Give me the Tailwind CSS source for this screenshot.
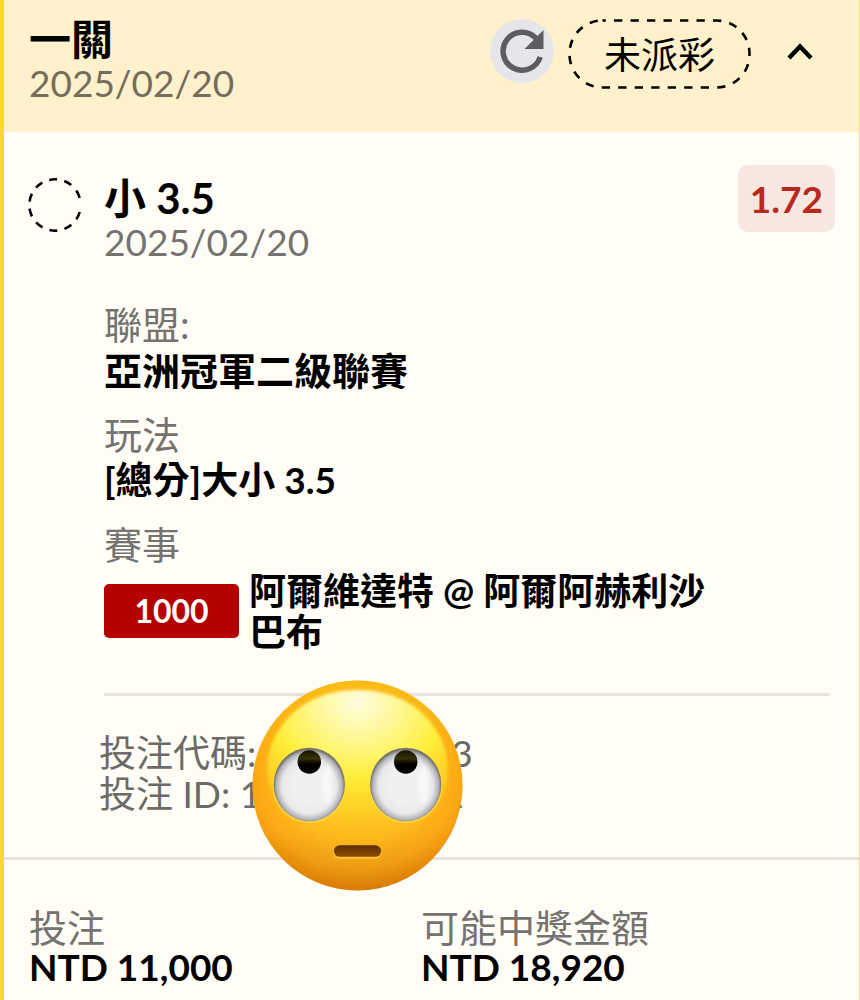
<!DOCTYPE html>
<html lang="zh-Hant">
  <head>
    <meta charset="UTF-8" />
    <meta name="viewport" content="width=device-width, initial-scale=1.0" />
    <title>一關 2025/02/20</title>
    <script src="https://cdn.jsdelivr.net/npm/@tailwindcss/browser@4"></script>
  </head>
  <body class="bg-[#fffdf5]">
    <main
      class="min-h-screen overflow-hidden border-l-4 border-r border-l-[#ffd633] border-r-[#f3e06a] bg-[#fffdf5] font-['Lato','Noto_Sans_CJK_TC',sans-serif] text-[37px] leading-[46px] text-black"
    >
      <header
        class="flex items-start justify-between bg-[#fef1cc] pt-[15px] pr-[25px] pb-[29px] pl-[25px]"
      >
        <div>
          <h1 class="text-[42px] leading-[48px] font-bold">一關</h1>
          <p class="leading-10 text-[#746d5b]">2025/02/20</p>
        </div>
        <div class="flex items-center pt-1">
          <button type="button" aria-label="重新整理" class="mb-[6px] size-16">
            <svg viewBox="0 0 64 64" class="size-16">
              <circle cx="32" cy="32" r="32" fill="#e5e6ea" />
              <path d="M46 19.2A19 19 0 1 0 50.2 38" fill="none" stroke="#5c5d60" stroke-width="5.5" />
              <path d="M53.5 11v19h-19z" fill="#5c5d60" />
            </svg>
          </button>
          <div class="relative ml-[14px] h-[70px] w-[183px] text-center leading-[72px]">
            <svg class="absolute inset-0 size-full">
              <rect
                x="1.5"
                y="1.5"
                width="180"
                height="67"
                rx="33"
                fill="none"
                stroke="#000"
                stroke-width="2.6"
                stroke-dasharray="8.3 8.2"
                stroke-dashoffset="5"
              />
            </svg>
            <span class="relative">未派彩</span>
          </div>
          <button type="button" aria-label="收合" class="mr-[10px] mb-1 ml-[25px] size-12">
            <svg viewBox="0 0 48 48" class="size-12">
              <path d="M13 30 24 18.5 35 30" fill="none" stroke="#000" stroke-width="4.4" />
            </svg>
          </button>
        </div>
      </header>

      <section class="flex pt-[33px] pr-6 pl-6">
        <div class="w-[76px] shrink-0 pt-[13px]">
          <svg viewBox="0 0 54 54" class="size-[54px]">
            <circle
              cx="27"
              cy="27"
              r="25.7"
              pathLength="360"
              fill="none"
              stroke="#000"
              stroke-width="2.6"
              stroke-dasharray="18 16.4"
              stroke-dashoffset="-16"
            />
          </svg>
        </div>
        <div class="grow">
          <div class="flex items-start justify-between">
            <div class="pt-[9px]">
              <h2 class="text-[42px] leading-[48px] font-bold">小 3.5</h2>
              <p class="leading-10 text-[#747370]">2025/02/20</p>
            </div>
            <span
              class="rounded-[10px] bg-[#f7e7e1] px-3 text-center leading-[67px] font-bold text-[#b8281f]"
              >1.72</span
            >
          </div>

          <dl class="mt-[39px] flex flex-col gap-[18px]">
            <div>
              <dt class="text-[38px] text-[#747370]">聯盟:</dt>
              <dd class="text-[38px] font-bold">亞洲冠軍二級聯賽</dd>
            </div>
            <div>
              <dt class="text-[38px] text-[#747370]">玩法</dt>
              <dd class="font-bold">[總分]大小 3.5</dd>
            </div>
            <div>
              <dt class="text-[38px] text-[#747370]">賽事</dt>
              <dd class="mt-[3px] flex items-center gap-[10px] font-bold">
                <span
                  class="w-[135px] shrink-0 rounded-[5px] bg-[#b50000] text-center text-[32px] leading-[54px] text-white"
                  >1000</span
                >
                <span class="max-w-[480px] leading-[41px]">阿爾維達特 @ 阿爾阿赫利沙巴布</span>
              </dd>
            </div>
          </dl>
          <hr class="mt-[41px] mr-[6px] border-t-[3px] border-[#e6e2dc]" />
        </div>
      </section>

      <section class="relative pt-9 pb-[43px] pl-[95px] leading-[41px] text-[#6b6a67]">
        <p>投注代碼: 1682-04573</p>
        <p>投注 ID: 1204 867352</p>
        <!-- rolling eyes face -->
        <svg viewBox="0 0 210 210" class="absolute top-[-16px] left-[248px] size-[211px]">
          <defs>
            <linearGradient id="rim" x1="0" y1="0" x2="0" y2="1">
              <stop offset="0" stop-color="#f8b80f" />
              <stop offset=".35" stop-color="#fda40c" />
              <stop offset=".7" stop-color="#fba315" />
              <stop offset="1" stop-color="#cf7508" />
            </linearGradient>
            <radialGradient id="side" cx=".5" cy=".42" r=".58">
              <stop offset=".55" stop-color="#ffc91f" stop-opacity=".7" />
              <stop offset=".82" stop-color="#ffb51a" stop-opacity=".45" />
              <stop offset="1" stop-color="#e88600" stop-opacity=".35" />
            </radialGradient>
            <radialGradient id="shine" cx=".5" cy=".08" r=".92">
              <stop offset="0" stop-color="#fffde0" />
              <stop offset=".3" stop-color="#fff784" />
              <stop offset=".52" stop-color="#ffee3a" />
              <stop offset=".75" stop-color="#ffd829" stop-opacity=".75" />
              <stop offset="1" stop-color="#ffb51a" stop-opacity="0" />
            </radialGradient>
            <radialGradient id="eye" cx=".5" cy=".52" r=".5">
              <stop offset=".5" stop-color="#f0f0f1" />
              <stop offset=".76" stop-color="#e9e9eb" />
              <stop offset=".92" stop-color="#b4b5b9" />
              <stop offset="1" stop-color="#77736b" />
            </radialGradient>
            <linearGradient id="pupil" x1="0" y1="0" x2="0" y2="1">
              <stop offset="0" stop-color="#161200" />
              <stop offset=".35" stop-color="#353009" />
              <stop offset=".6" stop-color="#000" />
            </linearGradient>
            <linearGradient id="mouth" x1="0" y1="0" x2="0" y2="1">
              <stop offset="0" stop-color="#5d3000" />
              <stop offset="1" stop-color="#8d4c02" />
            </linearGradient>
            <filter id="soft" x="-10%" y="-10%" width="120%" height="120%">
              <feGaussianBlur stdDeviation="1.6" />
            </filter>
          </defs>
          <circle cx="105" cy="105" r="104.5" fill="url(#rim)" />
          <circle cx="105" cy="105" r="104.5" fill="url(#side)" />
          <path
            d="M105 10C150 10 180 34 192 68C202 105 185 165 105 165S8 105 18 68C30 34 60 10 105 10Z"
            fill="url(#shine)"
            filter="url(#soft)"
          />
          <ellipse cx="57" cy="105.5" rx="36.5" ry="37" fill="#ffd94a" opacity=".8" />
          <ellipse cx="153" cy="105.5" rx="36.5" ry="37" fill="#ffd94a" opacity=".8" />
          <ellipse cx="57" cy="104" rx="35.5" ry="36.5" fill="url(#eye)" />
          <ellipse cx="153" cy="104" rx="35.5" ry="36.5" fill="url(#eye)" />
          <ellipse cx="75" cy="104" rx="5" ry="19" fill="#fff" opacity=".6" filter="url(#soft)" />
          <ellipse cx="171" cy="104" rx="5" ry="19" fill="#fff" opacity=".6" filter="url(#soft)" />
          <circle cx="57" cy="81.5" r="11.7" fill="url(#pupil)" />
          <circle cx="153" cy="81.5" r="11.7" fill="url(#pupil)" />
          <rect x="81" y="166" width="48" height="12" rx="6" fill="#ffc43d" />
          <rect x="81.5" y="164.5" width="47" height="11.5" rx="5.7" fill="url(#mouth)" />
        </svg>
      </section>

      <footer class="border-t-[3px] border-[#e6e2dc] pt-[47px] pb-[9px]">
        <dl class="grid grid-cols-2 pr-[46px] pl-[25px] leading-10">
          <div>
            <dt class="text-[38px] text-[#747370]">投注</dt>
            <dd class="font-bold">NTD 11,000</dd>
          </div>
          <div>
            <dt class="text-[38px] text-[#747370]">可能中獎金額</dt>
            <dd class="font-bold">NTD 18,920</dd>
          </div>
        </dl>
      </footer>
    </main>
  </body>
</html>
